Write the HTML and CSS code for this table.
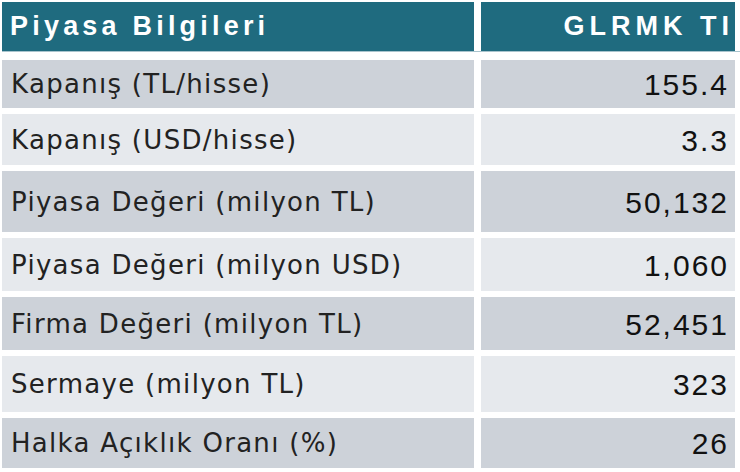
FILE: index.html
```html
<!DOCTYPE html>
<html lang="tr">
<head>
<meta charset="utf-8">
<link rel="stylesheet" href="styles.css">
</head>
<body>
<div class="table">
  <div class="head-row">
    <div class="hcell hleft">Piyasa Bilgileri</div>
    <div class="hcell hright">GLRMK TI</div>
  </div>
  <div class="rule"></div>
  <div class="rows">
    <div class="row dark h48"><div class="label">Kapanış (TL/hisse)</div><div class="value">155.4</div></div>
    <div class="row light h51"><div class="label">Kapanış (USD/hisse)</div><div class="value">3.3</div></div>
    <div class="row dark h61"><div class="label">Piyasa Değeri (milyon TL)</div><div class="value">50,132</div></div>
    <div class="row light h53"><div class="label">Piyasa Değeri (milyon USD)</div><div class="value">1,060</div></div>
    <div class="row dark h53"><div class="label">Firma Değeri (milyon TL)</div><div class="value">52,451</div></div>
    <div class="row light h56"><div class="label">Sermaye (milyon TL)</div><div class="value">323</div></div>
    <div class="row dark h50"><div class="label">Halka Açıklık Oranı (%)</div><div class="value">26</div></div>
  </div>
</div>
</body>
</html>
```

FILE: styles.css
```css
html, body {
  margin: 0;
  padding: 0;
  background: #ffffff;
}
.table {
  padding: 2px 5px 0 2px;
  width: 733px;
}
.head-row {
  display: grid;
  grid-template-columns: 472px 254px;
  column-gap: 7px;
  height: 49px;
}
.hcell {
  background: #1f6b7f;
  color: #ffffff;
  font-family: "Liberation Sans", Arial, sans-serif;
  font-weight: bold;
  font-size: 27px;
  display: flex;
  align-items: center;
}
.hleft {
  padding-left: 8px;
  letter-spacing: 4.2px;
}
.hright {
  justify-content: flex-end;
  padding-right: 1px;
  letter-spacing: 5px;
}
.rule {
  height: 1px;
  background: #a9c4cd;
  margin-right: -5px;
}
.rows {
  display: flex;
  flex-direction: column;
  gap: 6px;
  margin-top: 8px;
}
.row {
  display: grid;
  grid-template-columns: 472px 254px;
  column-gap: 7px;
}
.h48 { height: 48px; }
.h50 { height: 50px; }
.h51 { height: 51px; }
.h53 { height: 53px; }
.h56 { height: 56px; }
.h61 { height: 61px; }
.row > div {
  display: flex;
  align-items: center;
}
.dark > div { background: #cdd2d9; }
.light > div { background: #e6e9ed; }
.label {
  font-family: "DejaVu Sans", "Open Sans", sans-serif;
  font-size: 26px;
  color: #222222;
  padding-left: 9px;
  letter-spacing: 1.3px;
}
.value {
  justify-content: flex-end;
  font-family: "Liberation Sans", Arial, sans-serif;
  font-size: 30px;
  color: #111111;
  padding-right: 6px;
  letter-spacing: 2px;
  padding-top: 2px;
}
```
